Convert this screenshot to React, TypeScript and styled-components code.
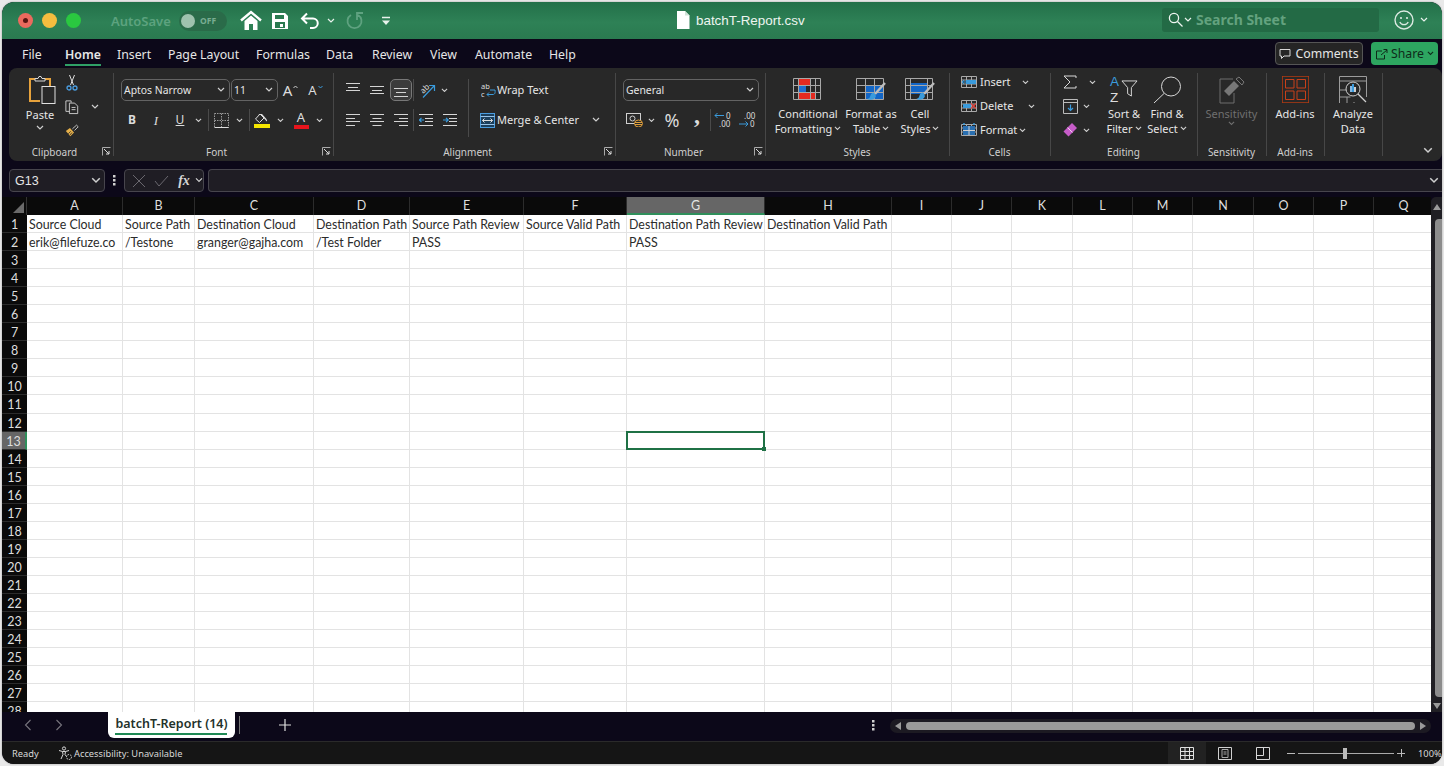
import React from "react";
import styled, { createGlobalStyle } from "styled-components";

const Global = createGlobalStyle`
  html, body { margin: 0; padding: 0; background: #e9e9e9; overflow: hidden; }
  #root { width: 1444px; height: 766px; }
  * { box-sizing: border-box; }
`;
const UI = `"Noto Sans", "Open Sans", sans-serif`;
const SHEET = `"Lato", "Open Sans", sans-serif`;

const Win = styled.div`
  width: 1440px; height: 762px; margin: 2px; border-radius: 12px; overflow: hidden;
  display: flex; flex-direction: column; background: #0c0819; font-family: ${UI}; color: #e6e6e6;
  box-shadow: 0 0 2px rgba(0,0,0,.35);
`;
const TitleBar = styled.header`
  height: 37px; flex: none; display: flex; align-items: center; position: relative;
  background: linear-gradient(180deg, #237049 0%, #2e8156 55%, #2a7a50 100%);
`;
const Lights = styled.div`display: flex; gap: 9px; margin-left: 16px; align-items: center;`;
const Light = styled.span<{ $c: string }>`
  width: 15px; height: 15px; border-radius: 50%; background: ${p => p.$c}; display: flex; align-items: center; justify-content: center;
`;
const RedDot = styled.span`width: 5px; height: 5px; border-radius: 50%; background: #5a1512;`;
const AutoSave = styled.span`margin-left: 30px; font-size: 13px; font-weight: 600; color: #5da37f; width: 68px; white-space: nowrap;`;
const Toggle = styled.span`
  width: 48px; height: 20px; border-radius: 10px; background: #2a6b49; display: flex; align-items: center; padding-left: 1px; gap: 5px;
  font-size: 8.5px; font-weight: 700; color: #79ad92;
`;
const Knob = styled.span`width: 14px; height: 14px; border-radius: 50%; background: #9fc2ae; margin-left: 1px;`;
const QuickSlot = styled.span<{ $w: number; $ml?: number }>`
  width: ${p => p.$w}px; margin-left: ${p => p.$ml || 0}px; display: flex; justify-content: center; align-items: center; flex: none;
`;
const DocTitle = styled.div`
  position: absolute; left: 674px; top: 9px; display: flex; align-items: center; gap: 6px;
  font: 13.4px "Liberation Sans", Arial, sans-serif; color: #eef5f0;
`;
const SearchBox = styled.div`
  position: absolute; left: 1160px; top: 6px; width: 217px; height: 24px; border-radius: 3px; background: #236a45;
  display: flex; align-items: center; padding: 0 0 1px 6px; font-size: 14px; font-weight: 700; color: #63a27f; gap: 1px;
`;
const SearchText = styled.span`margin-left: 3px; white-space: nowrap;`;
const Account = styled.div`position: absolute; left: 1392px; top: 8px; display: flex; align-items: center; gap: 6px;`;

const MenuRow = styled.nav`
  height: 29px; flex: none; display: flex; align-items: flex-start; background: #0c0819; position: relative; padding-top: 7px; font-size: 12.3px;
`;
const MenuItem = styled.span<{ $w: number; $active?: boolean }>`
  width: ${p => p.$w}px; flex: none; height: 20px; line-height: 17px; position: relative; white-space: nowrap;
  font-weight: ${p => (p.$active ? 600 : 400)};
  ${p => p.$active ? `&::after { content: ""; position: absolute; left: 0; width: 36px; top: 18px; height: 2px; background: #2fa066; }` : ""}
`;
const MenuSpacer = styled.span`flex: none; width: 20px;`;
const MenuButtons = styled.div`margin-left: auto; display: flex; gap: 8px; margin-right: 4px; margin-top: -4px;`;
const CommentBtn = styled.span`
  width: 88px; height: 23px; border: 1px solid #555; border-radius: 4px; background: #252525; display: flex; align-items: center; gap: 4px; justify-content: center; font-size: 12.3px;
`;
const ShareBtn = styled.span`
  width: 67px; height: 23px; border-radius: 4px; background: #2da560; display: flex; align-items: center; gap: 3px; justify-content: center; font-size: 12.3px; color: #0f2a1a;
`;

const Ribbon = styled.section`
  height: 93px; flex: none; margin-left: 7px; background: #282828; border-radius: 8px; display: flex; padding-top: 5px; position: relative;
`;
const Group = styled.div<{ $w: number }>`
  width: ${p => p.$w}px; flex: none; height: 83px; display: flex; flex-direction: column; position: relative;
  box-shadow: 1px 0 0 #474747;
`;
const Body = styled.div<{ $pl?: number; $pt?: number }>`
  height: 72px; flex: none; display: flex; padding-left: ${p => p.$pl || 0}px; padding-top: ${p => p.$pt || 0}px;
`;
const GroupLabel = styled.div<{ $launch?: boolean }>`
  flex: 1; text-align: center; font-size: 10px; line-height: 14px; color: #cfcfcf; position: relative; white-space: nowrap;
  padding-right: ${p => p.$launch ? 13 : 0}px;
`;
const LauncherBox = styled.span`position: absolute; right: 2px; top: 2px; display: flex;`;
const Stack = styled.div<{ $w?: number; $gap?: number; $up?: number; $ml?: number }>`
  display: flex; flex-direction: column; flex: none; gap: ${p => p.$gap ?? 8}px; ${p => p.$w ? `width:${p.$w}px;` : ""}
  margin-top: ${p => -(p.$up || 0)}px; margin-left: ${p => p.$ml || 0}px;
`;
const Row = styled.div`display: flex; align-items: center; height: 22px; flex: none;`;
const Slot = styled.span<{ $w: number; $h?: number; $ml?: number; $mt?: number; $on?: boolean }>`
  width: ${p => p.$w}px; height: ${p => p.$h || 22}px; flex: none; display: flex; align-items: center; justify-content: center;
  margin-left: ${p => p.$ml || 0}px; margin-top: ${p => p.$mt || 0}px;
  ${p => p.$on ? `background:#3c3c3c; border:1px solid #787878; border-radius:5px;` : ""}
`;
const VSep = styled.span<{ $h?: number }>`width: 1px; height: ${p => p.$h || 22}px; background: #4a4a4a; flex: none;`;
const Select = styled.span<{ $w: number; $ml?: number }>`
  width: ${p => p.$w}px; height: 22px; flex: none; border: 1px solid #636363; border-radius: 5px; display: flex; align-items: center; justify-content: space-between; padding: 0 4px 1px 2px;
  margin-left: ${p => p.$ml || 0}px; font-size: 10.4px; color: #e6e6e6;
`;
const GlyphText = styled.span<{ $size?: number; $weight?: number; $italic?: boolean; $under?: boolean; $serif?: boolean; $lift?: number }>`
  font-size: ${p => p.$size || 12}px; font-weight: ${p => p.$weight || 400}; line-height: 1; color: #dcdcdc;
  ${p => p.$italic ? "font-style: italic;" : ""} ${p => p.$under ? "text-decoration: underline;" : ""}
  ${p => p.$serif ? `font-family: "Liberation Serif", serif;` : ""}
  ${p => p.$lift ? `transform: translateY(-${p.$lift}px);` : ""}
`;
const Caret = styled.svg`margin-bottom: 7px; margin-left: 1px;`;
const FontA = styled.span<{ $bar: string }>`
  display: flex; flex-direction: column; align-items: center; font-size: 13px; line-height: 13px; color: #dcdcdc; width: 16px;
  &::after { content: ""; width: 15px; height: 4px; background: ${p => p.$bar}; margin-top: 1px; }
`;
const InlineText = styled.span<{ $w?: number }>`
  font-size: 11px; white-space: nowrap; flex: none; ${p => p.$w ? `width:${p.$w}px;` : ""} color: #e6e6e6; padding-bottom: 1px;
`;
const LargeBtn = styled.div<{ $w: number }>`
  width: ${p => p.$w}px; flex: none; display: flex; flex-direction: column; align-items: center;
`;
const LargeIcon = styled.div<{ $h?: number; $ml?: number }>`
  height: ${p => p.$h || 33}px; margin-left: ${p => p.$ml || 0}px; display: flex; align-items: center; justify-content: center; flex: none;
`;
const LargeText = styled.div<{ $dim?: boolean; $mt?: number }>`
  font-size: 11px; line-height: 15px; text-align: center; white-space: nowrap; color: ${p => p.$dim ? "#6f6f6f" : "#e6e6e6"};
  display: flex; align-items: center; justify-content: center; gap: 2px; margin-top: ${p => p.$mt || 0}px;
`;
const CellRow = styled.div`display: flex; align-items: center; height: 20px;`;
const Collapse = styled.span`position: absolute; right: 9px; bottom: 7px; display: flex;`;
const SortMark = styled.span`display: flex; align-items: flex-start; gap: 2px;`;
const SortLetters = styled.span`display: flex; flex-direction: column; font: 13.5px/15.5px "Liberation Sans", Arial, sans-serif; color: #ddd;`;
const SortA = styled.span`color: #3a9bdc;`;
const FunnelBox = styled.span`display: flex; margin-top: 6px;`;

const FormulaRow = styled.div`
  height: 36px; flex: none; background: #0c0819; display: flex; align-items: flex-start; padding: 8px 0 0 7px;
`;
const NameBox = styled.div`
  width: 96px; height: 23px; background: #1f1d24; border: 1px solid #47454d; border-radius: 4px; display: flex; align-items: center; justify-content: space-between; padding: 0 3px 0 5px;
  font: 12.5px "Liberation Sans", Arial, sans-serif; color: #e6e6e6;
`;
const Dots = styled.span`width: 19px; height: 23px; display: flex; align-items: center; justify-content: center; flex: none;`;
const FxBox = styled.div`
  width: 80px; height: 23px; background: #1f1d24; border: 1px solid #47454d; border-radius: 4px; display: flex; align-items: center; padding-left: 3px; flex: none;
`;
const FxText = styled.span`font: italic 700 14px "Liberation Serif", serif; color: #d5d5d5; width: 22px; text-align: center; flex: none;`;
const FormulaInput = styled.div`
  flex: 1; margin-left: 4px; height: 23px; background: #1f1d24; border: 1px solid #47454d; border-right: 0; border-radius: 4px 0 0 4px; display: flex; align-items: center; justify-content: flex-end; padding-right: 3px;
`;

const SheetArea = styled.div`height: 515px; flex: none; display: flex; background: #0c0819;`;
const GridWrap = styled.div`flex: 1; overflow: hidden; background: #fff;`;
const COLS = [96, 72, 119, 96, 114, 103, 138, 127, 60, 60, 61, 60, 60, 61, 60, 60, 60];
const Grid = styled.div`
  display: grid; width: 1433px;
  grid-template-columns: 25px ${COLS.map(c => c + "px").join(" ")};
  grid-template-rows: 18px repeat(28, 18.05px);
`;
const Corner = styled.div`background: #0a0a0a; border-right: 1px solid #333; display: flex; align-items: flex-end; justify-content: flex-end; padding: 0 2px 2px 0;`;
const ColHead = styled.div<{ $sel?: boolean }>`
  background: ${p => p.$sel ? "#666" : "#0a0a0a"}; color: ${p => p.$sel ? "#e4e4e4" : "#dedede"}; text-align: center; font: 12.5px/18px ${SHEET};
  border-right: 1px solid #2c2c2c; ${p => p.$sel ? "border-bottom: 2px solid #2f8f5b;" : ""}
`;
const RowHead = styled.div<{ $sel?: boolean }>`
  background: ${p => p.$sel ? "#666" : "#0a0a0a"}; color: #dedede; text-align: center; font: 12.5px/20px ${SHEET}; border-bottom: 1px solid #2c2c2c; overflow: hidden;
  border-right: ${p => p.$sel ? "2px solid #2f8f5b" : "0"};
`;
const Cell = styled.div<{ $sel?: boolean }>`
  background: #fff; border-right: 1px solid #e3e3e3; border-bottom: 1px solid #e3e3e3; color: #2b2b2b; position: relative;
  font: 12.4px/20px ${SHEET}; padding-left: 2px; white-space: nowrap; overflow: hidden;
  ${p => p.$sel ? "overflow: visible;" : ""}
`;
const SelBox = styled.span`
  position: absolute; left: -1px; top: -1px; right: -1px; bottom: -1px; border: 2px solid #1f7145; z-index: 2;
  &::after { content: ""; position: absolute; right: -3px; bottom: -3px; width: 4px; height: 4px; background: #1f7145; }
`;
const VScroll = styled.div`
  width: 11px; flex: none; background: #201f24; border-radius: 5px 0 0 0; display: flex; flex-direction: column; align-items: center; justify-content: space-between; padding: 6px 0 2px;
`;
const VThumb = styled.span`width: 7px; height: 478px; margin-top: 3px; border-radius: 4px 0 0 4px; background: #8c8c8c; align-self: flex-end;`;

const TabsBar = styled.div`height: 29px; flex: none; display: flex; align-items: flex-start; background: #0c0819;`;
const NavChevs = styled.div`display: flex; width: 106px; padding-left: 22px; gap: 23px; height: 26px; align-items: center; flex: none;`;
const SheetTab = styled.div`
  width: 127px; height: 26px; flex: none; background: #fff; border-radius: 0 0 6px 6px; color: #23312a; font-size: 12.5px; font-weight: 600; text-align: center; line-height: 24px; position: relative; white-space: nowrap;
  &::after { content: ""; position: absolute; left: 7px; right: 8px; top: 21px; height: 2px; background: #1f8a55; }
`;
const TabSep = styled.span`width: 1px; height: 18px; background: #777; margin: 4px 0 0 4px; flex: none;`;
const Plus = styled.span`margin-left: 39px; height: 26px; display: flex; align-items: center; flex: none;`;
const MoreDots = styled.span`margin-left: auto; width: 18px; height: 26px; display: flex; align-items: center; justify-content: center; flex: none; margin-right: 8px;`;
const HScroll = styled.div`
  width: 541px; height: 14px; margin-top: 7px; margin-right: 11px; border-radius: 7px; background: #1c1a22; flex: none; display: flex; align-items: center; padding: 0 4px; gap: 4px;
`;
const HThumb = styled.span`flex: 1; height: 8px; border-radius: 4px; background: #9a9a9a;`;
const Status = styled.footer`
  flex: 1; background: #151515; border-top: 1px solid #2a2a2a; display: flex; align-items: center; padding-left: 10px; font-size: 9.3px; color: #d8d8d8;
`;
const Ready = styled.span`width: 46px; flex: none;`;
const Access = styled.span`display: flex; align-items: center; gap: 2px; flex: none;`;
const StatusRight = styled.div`margin-left: auto; display: flex; align-items: center; height: 100%;`;
const ViewBtn = styled.span<{ $on?: boolean }>`
  width: 38px; height: 100%; display: flex; align-items: center; justify-content: center; background: ${p => p.$on ? "#222" : "transparent"};
`;
const ZoomMinus = styled.span`width: 8px; height: 1px; background: #bbb; position: relative; flex: none; margin-left: 5px;`;
const ZoomPlus = styled.span`width: 8px; height: 1px; background: #bbb; position: relative; flex: none;
  &::after { content: ""; position: absolute; left: 3.5px; top: -3.5px; width: 1px; height: 8px; background: #bbb; }
`;
const Slider = styled.span`width: 96px; height: 1px; background: #aaa; margin: 0 3px; position: relative; flex: none;`;
const SliderKnob = styled.span`position: absolute; left: 45px; top: -5px; width: 4px; height: 11px; background: #bbb;`;
const ZoomText = styled.span`margin-left: 13px; width: 24px; white-space: nowrap; overflow: hidden; flex: none;`;

/* icons */
const S = { fill: "none", stroke: "#d8d8d8", strokeWidth: 1 } as const;
const Chev = ({ c = "#cfcfcf", w = 8 }: { c?: string; w?: number }) => (
  <svg width={w} height={w * 0.7} viewBox="0 0 8 5.6"><path d="M1 1l3 3 3-3" fill="none" stroke={c} strokeWidth="1.2" /></svg>
);
const HomeIcon = () => (
  <svg width="22" height="21" viewBox="0 0 22 21"><path d="M1 10.5 11 2l10 8.5" fill="none" stroke="#fff" strokeWidth="2.4" /><path d="M4.5 11 11 5.5 17.5 11v9h-4.5v-6H9v6H4.5z" fill="#fff" /></svg>
);
const SaveIcon = () => (
  <svg width="18" height="18" viewBox="0 0 18 18"><path d="M1 1h13l3 3v13H1z" fill="#fff" /><path d="M4 3h9v4H4zM4 10h10v6H4z" fill="#2a7a50" /><path d="M9 12h3v3H9z" fill="#fff" /></svg>
);
const UndoIcon = () => (
  <svg width="20" height="18" viewBox="0 0 20 18"><path d="M7 1.5 2 6.5l5 5M2 6.5h11a4.6 4.6 0 0 1 0 9.5h-3" fill="none" stroke="#fff" strokeWidth="2" /></svg>
);
const RedoIcon = () => (
  <svg width="19" height="19" viewBox="0 0 19 19"><path d="M6 4a7 7 0 1 0 7 0M12 9V2h6" fill="none" stroke="#5fa280" strokeWidth="1.8" /></svg>
);
const CustomIcon = () => (
  <svg width="10" height="10" viewBox="0 0 10 10"><path d="M1 1.5h8" stroke="#e8f2ec" strokeWidth="1.5" /><path d="M1 4.5h8L5 9z" fill="#e8f2ec" /></svg>
);
const FileIcon = () => (
  <svg width="14" height="18" viewBox="0 0 14 18"><path d="M1 0h8l4.5 4.5V18H1z" fill="#fff" /><path d="M9 0v4.5h4.5" fill="#cfe3d7" /></svg>
);
const SearchIcon = () => (
  <svg width="15" height="15" viewBox="0 0 15 15"><circle cx="6" cy="6" r="4.6" fill="none" stroke="#f0f6f2" strokeWidth="1.3" /><path d="m9.5 9.5 5 5" stroke="#f0f6f2" strokeWidth="1.3" /></svg>
);
const Smiley = () => (
  <svg width="20" height="20" viewBox="0 0 20 20"><circle cx="10" cy="10" r="9" fill="none" stroke="#dbe9e1" strokeWidth="1.4" /><circle cx="7" cy="8" r="1.1" fill="#dbe9e1" /><circle cx="13" cy="8" r="1.1" fill="#dbe9e1" /><path d="M5.8 12a4.6 4.6 0 0 0 8.4 0" fill="none" stroke="#dbe9e1" strokeWidth="1.3" /></svg>
);
const CommentIcon = () => (
  <svg width="12" height="12" viewBox="0 0 12 12"><path d="M1 1.5h10v6.500H5L2.500 10.500V8H1z" {...S} /></svg>
);
const ShareIcon = () => (
  <svg width="13" height="12" viewBox="0 0 13 12"><path d="M7 3H1.500v8h8V7M6 7l6-5M8.500 1.500H12V5" fill="none" stroke="#0f2a1a" strokeWidth="1" /></svg>
);
const PasteIcon = () => (
  <svg width="27" height="28" viewBox="0 0 27 28">
    <path d="M7 3H1v22h10" fill="none" stroke="#e6a23c" strokeWidth="2" />
    <path d="M15 3h6v7" fill="none" stroke="#e6a23c" strokeWidth="2" />
    <path d="M6 5V2.500h3l1-2h2l1 2h3V5z" fill="#282828" stroke="#d8d8d8" />
    <rect x="13" y="10.500" width="13" height="17" fill="#282828" stroke="#e0e0e0" />
  </svg>
);
const Scissors = () => (
  <svg width="12" height="16" viewBox="0 0 12 16"><path d="M3.500 0 7.500 10M8.500 0 4.500 10" fill="none" stroke="#e0e0e0" /><circle cx="3" cy="13" r="2" fill="none" stroke="#4a9de0" strokeWidth="1.300" /><circle cx="9" cy="13" r="2" fill="none" stroke="#4a9de0" strokeWidth="1.300" /></svg>
);
const CopyIcon = () => (
  <svg width="16" height="16" viewBox="0 0 16 16"><path d="M5 13H1V1h6v2" {...S} /><path d="M5 3.500h6l3.500 3.500v8.500H5z" {...S} /><path d="M7.500 8.500h4.500M7.500 11h4.500" {...S} /></svg>
);
const BrushIcon = () => (
  <svg width="17" height="15" viewBox="0 0 17 15"><path d="M1 8l5.500 6.500L11 10 6 4.500z" fill="#e6b04a" /><path d="M9 5.500 14 1l2 2-4.500 4.500" fill="none" stroke="#e0e0e0" /><path d="M4 11.500l3-3M6 13l2.500-3" stroke="#282828" /></svg>
);
const Launcher = () => (
  <svg width="9" height="9" viewBox="0 0 9 9"><path d="M.5 8.500V.5h8" fill="none" stroke="#aaa" /><path d="M2 2l5 5M7 4v3H4" fill="none" stroke="#ddd" /></svg>
);
const VLINES = { top: [0.5, 3.5, 8.5], mid: [3.5, 7.5, 10.5], bot: [5.5, 9.5, 13.5] };
const VAlign = ({ kind }: { kind: "top" | "mid" | "bot" }) => {
  const [a, b, c] = VLINES[kind];
  const mid = kind === "top" ? `M0 ${a}h14M2 ${b + 1}h10M0 ${c - 1}h14` : `M0 ${a}h14M2 ${b}h10M0 ${c}h14`;
  return <svg width="14" height="14" viewBox="0 0 14 14"><path d={mid} stroke="#d4d4d4" fill="none" /></svg>;
};
const HAlign = ({ kind }: { kind: "left" | "center" | "right" }) => {
  const s = kind === "left" ? 0 : kind === "center" ? 2.5 : 5;
  return <svg width="14" height="12" viewBox="0 0 14 12"><path d={`M0 .5h14M${s} 4.500h9M0 7.500h14M${s} 11.500h9`} stroke="#d4d4d4" fill="none" /></svg>;
};
const Borders = () => (
  <svg width="15" height="15" viewBox="0 0 15 15"><path d="M.5.5h14v14H.5zM7.500.5v14M.5 7.500h14" fill="none" stroke="#9a9a9a" strokeDasharray="1.500 1" /><path d="M.5 14.500h14" stroke="#ddd" /></svg>
);
const FillIcon = () => (
  <svg width="16" height="15" viewBox="0 0 16 15"><path d="M6 1 1.500 6l4 3.500L10 5z" fill="none" stroke="#ddd" /><path d="M4 1h4l4 4.500c1 1.500 1.500 2 .8 3L7 2z" fill="#ddd" /><rect y="11" width="16" height="4" fill="#f5e500" /></svg>
);
const Orient = () => (
  <svg width="18" height="17" viewBox="0 0 18 17"><path d="M5 15.500 16 4M11 3.500h5.500V9" fill="none" stroke="#3a9bdc" strokeWidth="1.200" /><text x="2" y="10" fontSize="8" fill="#ddd" transform="rotate(-45 6 7)" fontFamily="Noto Sans">ab</text></svg>
);
const Indent = ({ rev }: { rev?: boolean }) => (
  <svg width="14" height="12" viewBox="0 0 14 12"><path d="M0 .5h14M6 4.500h8M6 7.500h8M0 11.500h14" stroke="#d8d8d8" fill="none" /><path d={rev ? "M5 6H0M2.500 3.800.3 6l2.200 2.200" : "M0 6h5M3 3.800 5.200 6 3 8.200"} stroke="#3a9bdc" fill="none" strokeWidth="1.200" /></svg>
);
const WrapIcon = () => (
  <svg width="16" height="16" viewBox="0 0 16 16"><text x="1" y="7" fontSize="7.500" fill="#ddd" fontFamily="Noto Sans">ab</text><text x="1" y="14.500" fontSize="7.500" fill="#ddd" fontFamily="Noto Sans">c</text><path d="M10 8h5c.6 4-1 4.500-2 4.500H7M9 10.500l-2 2 2 2" fill="none" stroke="#3a9bdc" /></svg>
);
const MergeIcon = () => (
  <svg width="15" height="15" viewBox="0 0 15 15"><rect x=".5" y=".5" width="14" height="14" fill="#1c3f5c" stroke="#4a9de0" /><path d="M.5 3.500h14M.5 11.500h14" stroke="#9ac4e8" /><path d="M2.500 7.500h10M4.500 5.500l-2 2 2 2M10.500 5.500l2 2-2 2" fill="none" stroke="#ddd" /></svg>
);
const Accounting = () => (
  <svg width="17" height="14" viewBox="0 0 17 14"><rect x=".5" y=".5" width="14" height="10" fill="none" stroke="#cfcfcf" /><circle cx="6.500" cy="5.500" r="2.500" fill="none" stroke="#cfcfcf" /><ellipse cx="12.500" cy="10.500" rx="4" ry="3.500" fill="#282828" stroke="#e0a03c" /><path d="M9 9.500h7M9 11.500h7" stroke="#e0a03c" /></svg>
);
const DecUp = ({ rev }: { rev?: boolean }) => (
  <svg width="20" height="21" viewBox="0 0 20 21">
    <text x={rev ? 7 : 13} y="8.500" fontSize="8" fill="#ddd" fontFamily="Noto Sans">{rev ? ".00" : "0"}</text>
    <text x={rev ? 13 : 6} y="16.500" fontSize="8" fill="#ddd" fontFamily="Noto Sans">{rev ? "0" : ".00"}</text>
    <path d={rev ? "M2 14h9M8.500 11.500 11 14l-2.500 2.500" : "M11 5.500H2M4.500 3 2 5.500 4.500 8"} fill="none" stroke="#3a9bdc" />
  </svg>
);
const Table = ({ lines, cells, children }: { lines: string; cells: [number, number, number, number, string][]; children?: React.ReactNode }) => (
  <svg width="30" height="23" viewBox="0 0 30 23">
    {cells.map(([x, y, w, h, c], i) => <rect key={i} x={x} y={y} width={w} height={h} fill={c} />)}
    <path d={`M.5.5h27v21H.5zM.5 7.500h27M.5 14.500h27${lines}`} fill="none" stroke="#a8a8a8" />
    {children}
  </svg>
);
const Brush2 = () => (
  <g>
    <path d="M29 5 19 16" stroke="#bdbdbd" strokeWidth="2.400" fill="none" />
    <path d="M18 14.500c-3 .5-3 2-4 4.500-.5 1.500-3 2-3 2 3 1.500 8 1 9-3z" fill="#3a9bdc" />
  </g>
);
const CondFmt = () => <Table lines="M5.500.5v21M17.500.5v21M22.500.5v21" cells={[[5, 1, 12, 6.500, "#e42a20"], [5, 8, 8, 6.500, "#1f6fd0"], [5, 15, 17, 6.500, "#e42a20"]]} />;
const FmtTable = () => <Table lines="M9.500.5v21M18.500.5v21" cells={[[9, 7, 18, 14, "#1366c6"]]}><Brush2 /></Table>;
const CellStyles = () => <Table lines="M5.500.5v21M22.500.5v21" cells={[[5, 5, 17, 11, "#1366c6"]]}><Brush2 /></Table>;
const SmallTable = ({ kind }: { kind: "i" | "d" | "f" }) => (
  <svg width="16" height="14" viewBox="0 0 16 14">
    <path d="M.5 1.500h15v11H.5zM.5 5h15M.5 9h15M5.500 1.500v11M10.500 1.500v11" fill="none" stroke="#aaa" />
    {kind === "i" && <><rect x="5" y="5" width="10" height="4" fill="#3a9bdc" /><path d="M7 7H1M3 5 1 7l2 2" stroke="#3a9bdc" fill="none" /></>}
    {kind === "d" && <><rect x="2" y="5" width="8" height="4" fill="#3a9bdc" /><path d="m10 4.500 5 5m0-5-5 5" stroke="#e0443c" strokeWidth="1.300" /></>}
    {kind === "f" && <><rect x="2" y="3" width="12" height="9" fill="#2a6fb0" /><path d="M3 0v2M13 0v2" stroke="#3a9bdc" strokeWidth="1.500" /><path d="M2 7.500h12M8 3v9" stroke="#cfcfcf" /></>}
  </svg>
);
const Sigma = () => <svg width="14" height="14" viewBox="0 0 14 14"><path d="M13 3V1H1l6 6-6 6h12v-2" fill="none" stroke="#d8d8d8" /></svg>;
const FillDown = () => <svg width="15" height="15" viewBox="0 0 15 15"><path d="M.5.5h14v14H.5zM.5 3.500h14" fill="none" stroke="#bbb" /><path d="M7.500 5.500v6M5 9l2.500 2.500L10 9" fill="none" stroke="#3a9bdc" strokeWidth="1.200" /></svg>;
const Eraser = () => <svg width="16" height="16" viewBox="0 0 16 16"><path d="M10 1 15 6 6.500 14.500 1.500 9.500z" fill="#c65cc8" /><path d="M5.500 5.500 10.500 10.500" stroke="#ecd2ec" /></svg>;
const Funnel = () => <svg width="17" height="17" viewBox="0 0 18 18"><path d="M1 1h16l-6 7v9l-4-2.500V8z" fill="none" stroke="#ddd" /></svg>;
const Magnifier = () => <svg width="29" height="28" viewBox="0 0 29 28"><circle cx="18" cy="10.500" r="9.500" {...S} /><path d="M11 17.500 1 27" {...S} /></svg>;
const SensIcon = () => (
  <svg width="26" height="28" viewBox="0 0 26 28"><path d="M14 3H1v24h14V17" fill="none" stroke="#6c6c6c" /><path d="M5 15 15 5l5 5-10 10z" fill="#777" /><path d="m17 3 3-2 5 5-2 3z" fill="none" stroke="#777" /></svg>
);
const AddIns = () => (
  <svg width="27" height="27" viewBox="0 0 27 27"><rect width="27" height="27" fill="#b33a12" /><path d="M.8.8h25.400v25.400H.8z" fill="#282828" /><path d="M3.500 3.500h8.500v8.500H3.500zM15 3.500h8.500v8.500H15zM3.500 15h8.500v8.500H3.500zM15 15h8.500v8.500H15z" fill="none" stroke="#c8401a" /></svg>
);
const Analyze = () => (
  <svg width="28" height="28" viewBox="0 0 28 28">
    <path d="M.5 27V.5h27V21M.5 5h27M.5 14h8M.5 21h11M8 21v6M15 26v1" fill="none" stroke="#9c9c9c" />
    <circle cx="14" cy="13" r="7" fill="#282828" stroke="#cfcfcf" />
    <path d="M11 10v6h2v-6z" fill="#8ab8e0" /><path d="M13 8v8h2V8z" fill="#3a9bdc" /><path d="M15 11v5h2v-5z" fill="#cfcfcf" />
    <path d="m19 18 8 8" stroke="#cfcfcf" strokeWidth="1.200" />
  </svg>
);
const XIcon = () => <svg width="14" height="14" viewBox="0 0 14 14"><path d="m1 1 12 12M13 1 1 13" stroke="#6a686f" fill="none" /></svg>;
const CheckIcon = () => <svg width="15" height="12" viewBox="0 0 15 12"><path d="m1 6 4 5 9-10" stroke="#6a686f" fill="none" /></svg>;
const Tri = ({ d }: { d: "up" | "down" | "left" | "right" }) => {
  const p = { up: "M4 1 8 7H0z", down: "M4 7 0 1h8z", left: "M1 4l6-4v8z", right: "M7 4 1 0v8z" }[d];
  return <svg width="8" height="8" viewBox="0 0 8 8"><path d={p} fill="#9a9a9a" /></svg>;
};
const NavChev = ({ right }: { right?: boolean }) => (
  <svg width="8" height="12" viewBox="0 0 8 12"><path d={right ? "m1.500 1 5 5-5 5" : "m6.500 1-5 5 5 5"} fill="none" stroke="#77757d" strokeWidth="1.100" /></svg>
);
const PlusIcon = () => <svg width="12" height="12" viewBox="0 0 12 12"><path d="M6 0v12M0 6h12" stroke="#e0e0e0" strokeWidth="1.200" /></svg>;
const VDots = () => <svg width="3" height="11" viewBox="0 0 3 11"><path d="M0 0h2.500v2.500H0zM0 4h2.500v2.500H0zM0 8h2.500v2.500H0z" fill="#d0d0d0" /></svg>;
const AccIcon = () => (
  <svg width="14" height="14" viewBox="0 0 14 14"><circle cx="6" cy="2.500" r="1.600" {...S} /><path d="M1 4.500 4.500 5.500h3L11 4.500M4.500 5.500 5 8.500 3 13M7.500 5.500 7 8.500l1.500 2" {...S} /><circle cx="11" cy="11" r="2.500" fill="none" stroke="#d8d8d8" strokeDasharray="1.500 1" /></svg>
);
const GridView = () => <svg width="14" height="13" viewBox="0 0 14 13"><path d="M.5.5h13v12H.5zM.5 4.500h13M.5 8.500h13M5 .5v12M9.500.5v12" fill="none" stroke="#e0e0e0" /></svg>;
const PageView = () => <svg width="14" height="13" viewBox="0 0 14 13"><path d="M.5.5h13v12H.5z" fill="none" stroke="#d0d0d0" /><path d="M4 2.500h6v8H4z" fill="none" stroke="#a8a8a8" /><path d="M5.500 5h3M5.500 7h3" stroke="#a8a8a8" /></svg>;
const BreakView = () => <svg width="14" height="13" viewBox="0 0 14 13"><path d="M.5.5h13v12H.5zM.5 8.500h7V.5" fill="none" stroke="#d8d8d8" /></svg>;

const LETTERS = "ABCDEFGHIJKLMNOPQ".split("");
const DATA: Record<string, string> = {
  A1: "Source Cloud", B1: "Source Path", C1: "Destination Cloud", D1: "Destination Path", E1: "Source Path Review", F1: "Source Valid Path", G1: "Destination Path Review", H1: "Destination Valid Path",
  A2: "erik@filefuze.co", B2: "/Testone", C2: "granger@gajha.com", D2: "/Test Folder", E2: "PASS", G2: "PASS",
};
const MENU: [string, number, boolean?][] = [
  ["File", 43], ["Home", 52, true], ["Insert", 51], ["Page Layout", 88], ["Formulas", 70], ["Data", 46], ["Review", 58], ["View", 45], ["Automate", 74], ["Help", 40],
];

export default function App() {
  return (
    <Win>
      <Global />
      <TitleBar>
        <Lights>
          <Light $c="#ec6a5e"><RedDot /></Light>
          <Light $c="#f5bd3f" />
          <Light $c="#2ac840" />
        </Lights>
        <AutoSave>AutoSave</AutoSave>
        <Toggle><Knob />OFF</Toggle>
        <QuickSlot $w={22} $ml={13}><HomeIcon /></QuickSlot>
        <QuickSlot $w={18} $ml={9}><SaveIcon /></QuickSlot>
        <QuickSlot $w={20} $ml={11}><UndoIcon /></QuickSlot>
        <QuickSlot $w={10} $ml={6}><Chev c="#e8f2ec" /></QuickSlot>
        <QuickSlot $w={19} $ml={9}><RedoIcon /></QuickSlot>
        <QuickSlot $w={10} $ml={17}><CustomIcon /></QuickSlot>
        <DocTitle><FileIcon />batchT-Report.csv</DocTitle>
        <SearchBox><SearchIcon /><Chev c="#e8f2ec" /><SearchText>Search Sheet</SearchText></SearchBox>
        <Account><Smiley /><Chev c="#e8f2ec" /></Account>
      </TitleBar>
      <MenuRow>
        <MenuSpacer />
        {MENU.map(([t, w, a]) => <MenuItem key={t} $w={w} $active={a}>{t}</MenuItem>)}
        <MenuButtons>
          <CommentBtn><CommentIcon />Comments</CommentBtn>
          <ShareBtn><ShareIcon />Share<Chev c="#0f2a1a" w={7} /></ShareBtn>
        </MenuButtons>
      </MenuRow>
      <Ribbon>
        <Group $w={104}>
          <Body $pl={6}>
            <LargeBtn $w={50}>
              <LargeIcon $h={34} $ml={5}><PasteIcon /></LargeIcon>
              <LargeText>Paste</LargeText>
              <LargeText $mt={3}><Chev /></LargeText>
            </LargeBtn>
            <Stack $w={14} $gap={3.5}>
              <Slot $w={14} $h={20}><Scissors /></Slot>
              <Slot $w={14} $h={20}><CopyIcon /></Slot>
              <Slot $w={14} $h={20}><BrushIcon /></Slot>
            </Stack>
            <Slot $w={8} $ml={12} $mt={23}><Chev /></Slot>
          </Body>
          <GroupLabel $launch>Clipboard<LauncherBox><Launcher /></LauncherBox></GroupLabel>
        </Group>

        <Group $w={220}>
          <Body $pl={8} $pt={6}>
            <Stack>
              <Row>
                <Select $w={109}>Aptos Narrow<Chev /></Select>
                <Select $w={47} $ml={1}>11<Chev /></Select>
                <Slot $w={25}><GlyphText $size={15}>A</GlyphText><Caret width="5" height="4" viewBox="0 0 5 4"><path d="M.5 3 2.500 1l2 2" fill="none" stroke="#ccc" /></Caret></Slot>
                <Slot $w={25}><GlyphText $size={13}>A</GlyphText><Caret width="5" height="4" viewBox="0 0 5 4"><path d="M.5 1l2 2 2-2" fill="none" stroke="#3a9bdc" /></Caret></Slot>
              </Row>
              <Row>
                <Slot $w={24} $ml={-1}><GlyphText $weight={700}>B</GlyphText></Slot>
                <Slot $w={24}><GlyphText $italic $serif $size={13}>I</GlyphText></Slot>
                <Slot $w={24}><GlyphText $under>U</GlyphText></Slot>
                <Slot $w={12}><Chev w={7} /></Slot>
                <Slot $w={8}><VSep /></Slot>
                <Slot $w={18}><Borders /></Slot>
                <Slot $w={18}><Chev w={7} /></Slot>
                <Slot $w={2}><VSep /></Slot>
                <Slot $w={24}><FillIcon /></Slot>
                <Slot $w={12}><Chev w={7} /></Slot>
                <Slot $w={26} $ml={2}><FontA $bar="#e8141c">A</FontA></Slot>
                <Slot $w={10}><Chev w={7} /></Slot>
              </Row>
            </Stack>
          </Body>
          <GroupLabel $launch>Font<LauncherBox><Launcher /></LauncherBox></GroupLabel>
        </Group>

        <Group $w={282}>
          <Body $pl={8} $pt={6}>
            <Stack $w={127}>
              <Row>
                <Slot $w={24}><VAlign kind="top" /></Slot>
                <Slot $w={24}><VAlign kind="mid" /></Slot>
                <Slot $w={22} $ml={1} $on><VAlign kind="bot" /></Slot>
                <Slot $w={1} $ml={1}><VSep /></Slot>
                <Slot $w={26}><Orient /></Slot>
                <Slot $w={8}><Chev w={7} /></Slot>
              </Row>
              <Row>
                <Slot $w={24}><HAlign kind="left" /></Slot>
                <Slot $w={24}><HAlign kind="center" /></Slot>
                <Slot $w={24}><HAlign kind="right" /></Slot>
                <Slot $w={1}><VSep /></Slot>
                <Slot $w={24}><Indent rev /></Slot>
                <Slot $w={24}><Indent /></Slot>
              </Row>
            </Stack>
            <VSep $h={58} />
            <Stack $gap={8} $ml={9}>
              <Row><Slot $w={19}><WrapIcon /></Slot><InlineText>Wrap Text</InlineText></Row>
              <Row><Slot $w={19}><MergeIcon /></Slot><InlineText $w={95}>Merge &amp; Center</InlineText><Chev /></Row>
            </Stack>
          </Body>
          <GroupLabel $launch>Alignment<LauncherBox><Launcher /></LauncherBox></GroupLabel>
        </Group>

        <Group $w={150}>
          <Body $pl={8} $pt={6}>
            <Stack>
              <Row><Select $w={136}>General<Chev /></Select></Row>
              <Row>
                <Slot $w={22}><Accounting /></Slot>
                <Slot $w={12}><Chev w={7} /></Slot>
                <Slot $w={26} $ml={2}><GlyphText $size={18}>%</GlyphText></Slot>
                <Slot $w={24}><GlyphText $size={24} $weight={700} $serif $lift={5}>,</GlyphText></Slot>
                <Slot $w={2}><VSep /></Slot>
                <Slot $w={24}><DecUp /></Slot>
                <Slot $w={24}><DecUp rev /></Slot>
              </Row>
            </Stack>
          </Body>
          <GroupLabel $launch>Number<LauncherBox><Launcher /></LauncherBox></GroupLabel>
        </Group>

        <Group $w={184}>
          <Body $pl={9}>
            <LargeBtn $w={68}><LargeIcon><CondFmt /></LargeIcon><LargeText>Conditional</LargeText><LargeText>Formatting <Chev w={7} /></LargeText></LargeBtn>
            <LargeBtn $w={58}><LargeIcon><FmtTable /></LargeIcon><LargeText>Format as</LargeText><LargeText>Table <Chev w={7} /></LargeText></LargeBtn>
            <LargeBtn $w={40}><LargeIcon><CellStyles /></LargeIcon><LargeText>Cell</LargeText><LargeText>Styles <Chev w={7} /></LargeText></LargeBtn>
          </Body>
          <GroupLabel>Styles</GroupLabel>
        </Group>

        <Group $w={101}>
          <Body $pl={9}>
            <Stack $gap={4} $up={1}>
              <CellRow><Slot $w={22} $h={20}><SmallTable kind="i" /></Slot><InlineText $w={42}>Insert</InlineText><Chev w={7} /></CellRow>
              <CellRow><Slot $w={22} $h={20}><SmallTable kind="d" /></Slot><InlineText $w={48}>Delete</InlineText><Chev w={7} /></CellRow>
              <CellRow><Slot $w={22} $h={20}><SmallTable kind="f" /></Slot><InlineText $w={39}>Format</InlineText><Chev w={7} /></CellRow>
            </Stack>
          </Body>
          <GroupLabel>Cells</GroupLabel>
        </Group>

        <Group $w={147}>
          <Body $pl={10}>
            <Stack $w={42} $gap={4} $up={1}>
              <CellRow><Slot $w={20} $h={20}><Sigma /></Slot><Slot $w={8} $h={20} $ml={8}><Chev w={7} /></Slot></CellRow>
              <CellRow><Slot $w={20} $h={20}><FillDown /></Slot><Slot $w={8} $h={20} $ml={2}><Chev w={7} /></Slot></CellRow>
              <CellRow><Slot $w={20} $h={20}><Eraser /></Slot><Slot $w={8} $h={20} $ml={2}><Chev w={7} /></Slot></CellRow>
            </Stack>
            <LargeBtn $w={44}>
              <LargeIcon><SortMark><SortLetters><SortA>A</SortA>Z</SortLetters><FunnelBox><Funnel /></FunnelBox></SortMark></LargeIcon>
              <LargeText>Sort &amp;</LargeText><LargeText>Filter <Chev w={7} /></LargeText>
            </LargeBtn>
            <LargeBtn $w={42}><LargeIcon><Magnifier /></LargeIcon><LargeText>Find &amp;</LargeText><LargeText>Select <Chev w={7} /></LargeText></LargeBtn>
          </Body>
          <GroupLabel>Editing</GroupLabel>
        </Group>

        <Group $w={69}>
          <Body>
            <LargeBtn $w={69}><LargeIcon><SensIcon /></LargeIcon><LargeText $dim>Sensitivity</LargeText><LargeText $dim><Chev c="#6f6f6f" w={7} /></LargeText></LargeBtn>
          </Body>
          <GroupLabel>Sensitivity</GroupLabel>
        </Group>

        <Group $w={58}>
          <Body>
            <LargeBtn $w={58}><LargeIcon><AddIns /></LargeIcon><LargeText>Add-ins</LargeText></LargeBtn>
          </Body>
          <GroupLabel>Add-ins</GroupLabel>
        </Group>

        <Group $w={58}>
          <Body>
            <LargeBtn $w={58}><LargeIcon><Analyze /></LargeIcon><LargeText>Analyze</LargeText><LargeText>Data</LargeText></LargeBtn>
          </Body>
        </Group>
        <Collapse><Chev w={10} /></Collapse>
      </Ribbon>

      <FormulaRow>
        <NameBox>G13<Chev w={10} /></NameBox>
        <Dots><VDots /></Dots>
        <FxBox>
          <Slot $w={22} $h={20}><XIcon /></Slot>
          <Slot $w={23} $h={20}><CheckIcon /></Slot>
          <FxText>fx</FxText>
          <Chev w={9} />
        </FxBox>
        <FormulaInput><Chev w={10} /></FormulaInput>
      </FormulaRow>

      <SheetArea>
        <GridWrap>
          <Grid>
            <Corner><svg width="11" height="11" viewBox="0 0 11 11"><path d="M11 0v11H0z" fill="#6a6a6a" /></svg></Corner>
            {LETTERS.map(l => <ColHead key={l} $sel={l === "G"}>{l}</ColHead>)}
            {Array.from({ length: 28 }, (_, i) => (
              <React.Fragment key={i}>
                <RowHead $sel={i === 12}>{i + 1}</RowHead>
                {LETTERS.map(l => {
                  const sel = l === "G" && i === 12;
                  return <Cell key={l} $sel={sel}>{DATA[`${l}${i + 1}`]}{sel && <SelBox />}</Cell>;
                })}
              </React.Fragment>
            ))}
          </Grid>
        </GridWrap>
        <VScroll><Tri d="up" /><VThumb /><Tri d="down" /></VScroll>
      </SheetArea>

      <TabsBar>
        <NavChevs><NavChev /><NavChev right /></NavChevs>
        <SheetTab>batchT-Report (14)</SheetTab>
        <TabSep />
        <Plus><PlusIcon /></Plus>
        <MoreDots><VDots /></MoreDots>
        <HScroll><Tri d="left" /><HThumb /><Tri d="right" /></HScroll>
      </TabsBar>
      <Status>
        <Ready>Ready</Ready>
        <Access><AccIcon />Accessibility: Unavailable</Access>
        <StatusRight>
          <ViewBtn $on><GridView /></ViewBtn>
          <ViewBtn><PageView /></ViewBtn>
          <ViewBtn><BreakView /></ViewBtn>
          <ZoomMinus />
          <Slider><SliderKnob /></Slider>
          <ZoomPlus />
          <ZoomText>100%</ZoomText>
        </StatusRight>
      </Status>
    </Win>
  );
}
